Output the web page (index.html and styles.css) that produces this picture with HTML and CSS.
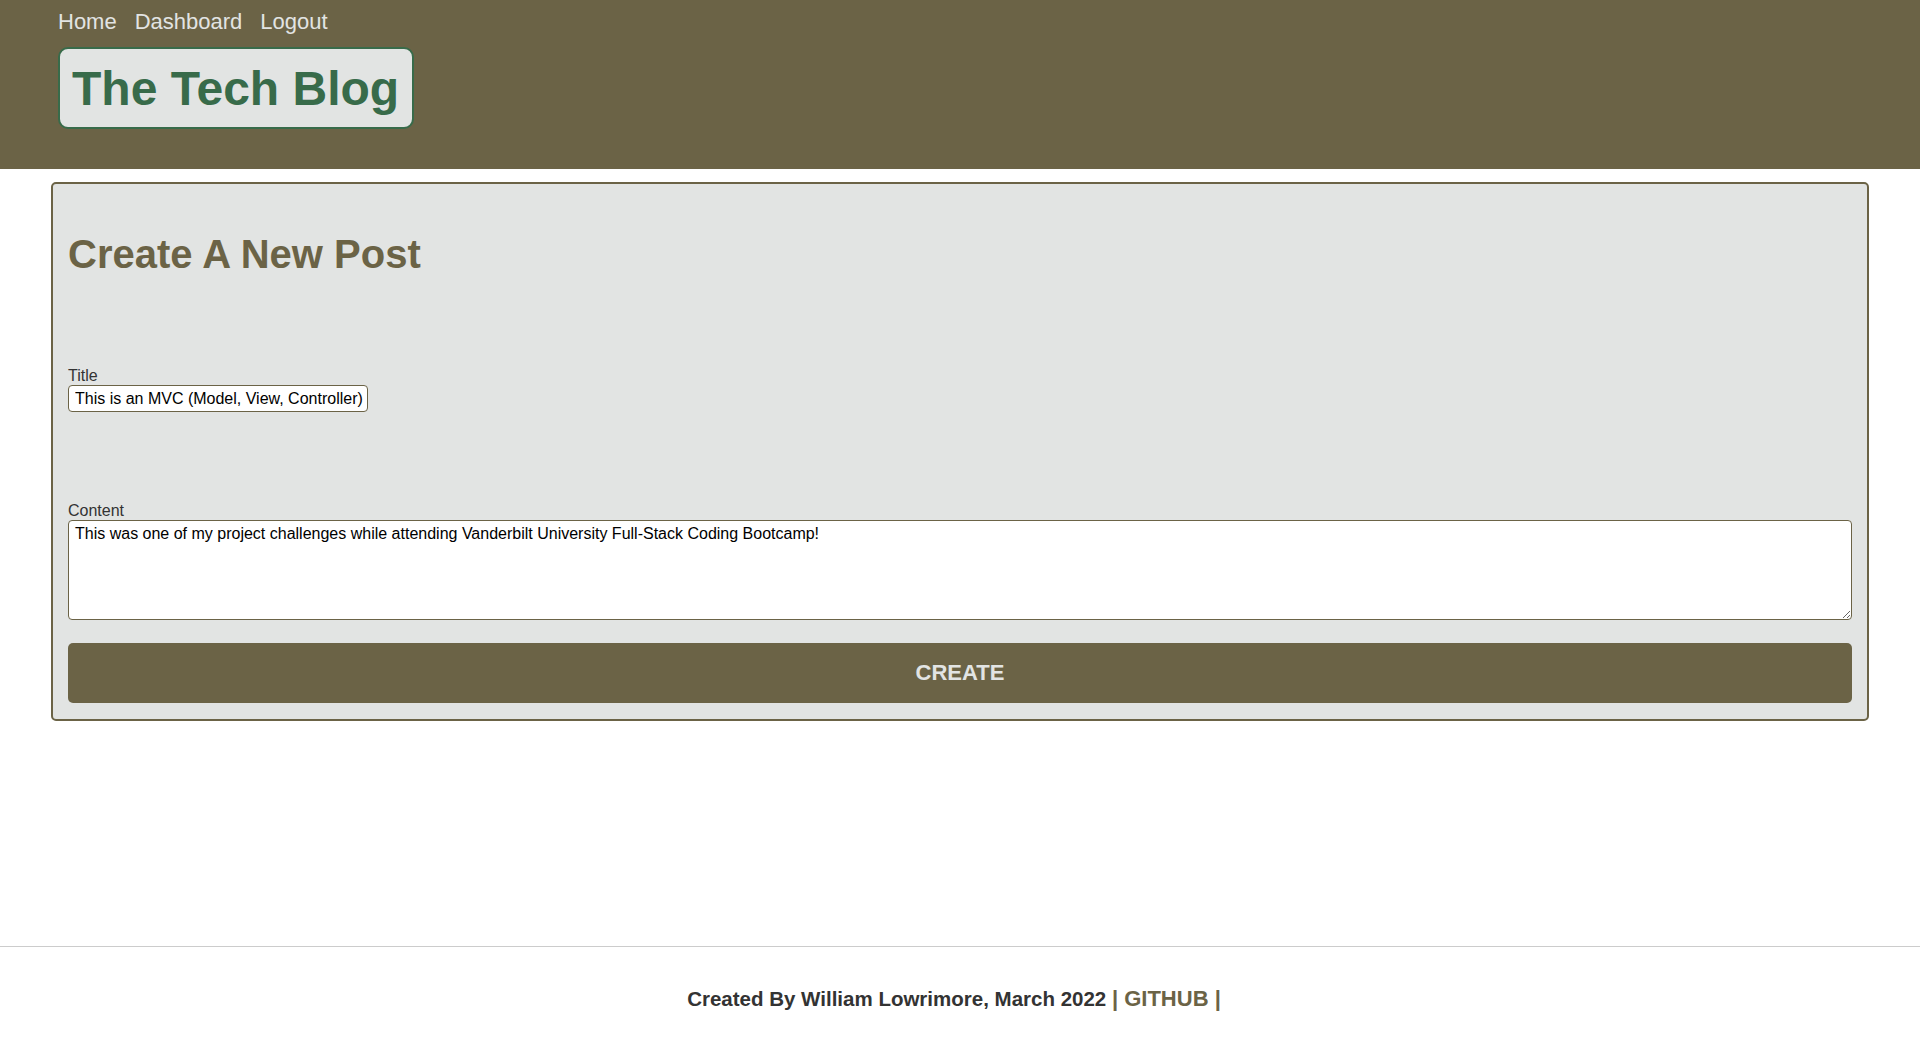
FILE: index.html
```html
<!DOCTYPE html>
<html lang="en">
<head>
<meta charset="utf-8">
<title>The Tech Blog</title>
<link rel="stylesheet" href="styles.css">
</head>
<body>
<header class="site-header">
  <nav class="nav">
    <a href="#" class="nav-link">Home</a>
    <a href="#" class="nav-link">Dashboard</a>
    <a href="#" class="nav-link">Logout</a>
  </nav>
  <div class="brand"><h1 class="brand-title">The Tech Blog</h1></div>
</header>
<main class="main">
  <section class="card">
    <h2 class="card-title">Create A New Post</h2>
    <form class="post-form">
      <div class="field">
        <label class="label" for="title">Title</label>
        <input class="input" id="title" type="text" value="This is an MVC (Model, View, Controller)">
      </div>
      <div class="field field-content">
        <label class="label" for="content">Content</label>
        <textarea class="textarea" id="content">This was one of my project challenges while attending Vanderbilt University Full-Stack Coding Bootcamp!</textarea>
      </div>
      <button class="btn" type="button">CREATE</button>
    </form>
  </section>
</main>
<footer class="footer">
  <p class="footer-text">Created By William Lowrimore, March 2022 <span class="footer-link">| GITHUB |</span></p>
</footer>
</body>
</html>
```

FILE: styles.css
```css
* { box-sizing: border-box; }

html, body {
  margin: 0;
  padding: 0;
}

body {
  font-family: "Liberation Sans", Arial, sans-serif;
  background: #ffffff;
  min-height: 100vh;
  display: flex;
  flex-direction: column;
}

.site-header {
  background: #6b6346;
  padding: 9px 0 40px 58px;
  display: flex;
  flex-direction: column;
  align-items: flex-start;
}

.nav {
  display: flex;
  gap: 18px;
  font-size: 22px;
  line-height: 25px;
}

.nav-link {
  color: #e2e4e3;
  text-decoration: none;
}

.brand {
  margin-top: 13px;
  background: #e2e4e3;
  border: 2px solid #386b4a;
  border-radius: 10px;
  padding: 12px 13px 11px 12px;
}

.brand-title {
  margin: 0;
  font-size: 48px;
  line-height: 55px;
  font-weight: bold;
  color: #386b4a;
}

.main {
  flex: 1;
}

.card {
  margin: 13px 51px 0;
  background: #e2e4e3;
  border: 2px solid #6b6346;
  border-radius: 5px;
  padding: 15px 15px 16px;
}

.card-title {
  margin: 32px 0 90px;
  font-size: 40px;
  line-height: 46px;
  font-weight: bold;
  color: #6b6346;
}

.field {
  display: flex;
  flex-direction: column;
  align-items: flex-start;
}

.field-content {
  margin-top: 90px;
  align-items: stretch;
}

.label {
  font-size: 16px;
  line-height: 18px;
  color: #333333;
}

.input {
  width: 300px;
  height: 27px;
  padding: 0 0 0 6px;
  border: 1px solid #6b6346;
  border-radius: 4px;
  background: #ffffff;
  font-family: "Liberation Sans", Arial, sans-serif;
  font-size: 16px;
  color: #000000;
}

.textarea {
  width: 100%;
  height: 100px;
  padding: 4px 6px;
  border: 1px solid #6b6346;
  border-radius: 4px;
  background: #ffffff;
  font-family: "Liberation Sans", Arial, sans-serif;
  font-size: 16px;
  line-height: 18px;
  color: #000000;
}

.btn {
  display: block;
  width: 100%;
  height: 60px;
  margin-top: 23px;
  border: none;
  border-radius: 5px;
  background: #6b6346;
  color: #e2e4e3;
  font-family: "Liberation Sans", Arial, sans-serif;
  font-size: 22px;
  font-weight: bold;
}

.footer {
  border-top: 1px solid #cccccc;
  padding: 40px 12px 42px 0;
  text-align: center;
}

.footer-text {
  margin: 0;
  font-size: 20.5px;
  line-height: 24px;
  font-weight: bold;
  color: #333333;
}

.footer-link {
  color: #6b6346;
  font-size: 22px;
}
```
